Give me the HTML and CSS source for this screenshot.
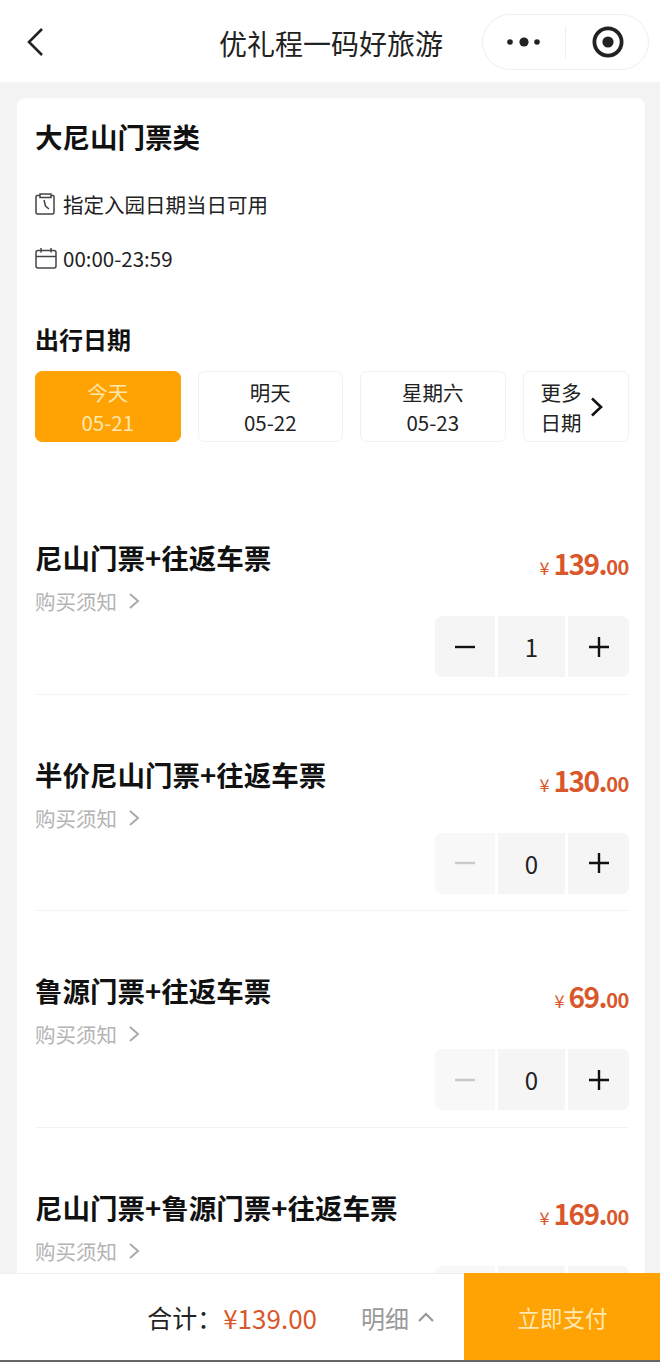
FILE: index.html
```html
<!DOCTYPE html>
<html lang="zh-CN">
<head>
  <meta charset="UTF-8">
  <meta name="viewport" content="width=device-width, initial-scale=1.0">
  <title>优礼程一码好旅游</title>
  <link rel="stylesheet" href="styles.css">
</head>
<body>

<header class="navBar">
  <svg class="backIcon" width="20" height="32" viewBox="0 0 20 32"><path d="M17 3 L4 16 L17 29" fill="none" stroke="#222" stroke-width="2.6"/></svg>
  <h1 class="navTitle">优礼程一码好旅游</h1>
  <div class="capsule">
    <svg width="36" height="12" viewBox="0 0 36 12"><circle cx="5" cy="6" r="2.8" fill="#222"/><circle cx="19" cy="6" r="4.6" fill="#222"/><circle cx="32" cy="6" r="2.8" fill="#222"/></svg>
    <span class="capsuleLine"></span>
    <svg width="32" height="32" viewBox="0 0 32 32"><circle cx="16" cy="16" r="13.6" fill="none" stroke="#222" stroke-width="3.8"/><circle cx="16" cy="16" r="5.6" fill="#222"/></svg>
  </div>
</header>

<main class="content">
  <div class="card">
    <h2 class="cardTitle">大尼山门票类</h2>
    <p class="infoRow">
      <svg width="22" height="22" viewBox="0 0 22 22" fill="none" stroke="#444" stroke-width="1.5"><path d="M5 2.5 H2 Q1 2.5 1 3.5 V19.5 Q1 21 2.5 21 H17.5 Q19 21 19 19.5 V3.5 Q19 2.5 18 2.5 H16"/><path d="M5 1 H16 V4.5 H5 Z"/><path d="M9 7 L10.5 13 L14 16"/></svg>
      指定入园日期当日可用
    </p>
    <p class="infoRow">
      <svg width="22" height="22" viewBox="0 0 22 22" fill="none" stroke="#444" stroke-width="1.5"><rect x="1" y="3.5" width="20" height="17.5" rx="2"/><path d="M1 9.5 H21 M6 1 V5.5 M16 1 V5.5"/></svg>
      00:00-23:59
    </p>

    <h3 class="dateLabel">出行日期</h3>
    <div class="dateRow">
      <div class="dateBtn active"><span>今天</span><span>05-21</span></div>
      <div class="dateBtn"><span>明天</span><span>05-22</span></div>
      <div class="dateBtn"><span>星期六</span><span>05-23</span></div>
      <div class="dateBtn moreBtn">
        <div class="moreText"><span>更多</span><span>日期</span></div>
        <svg width="14" height="20" viewBox="0 0 14 20"><path d="M2 1.5 L11 10 L2 18.5" fill="none" stroke="#111" stroke-width="2.6"/></svg>
      </div>
    </div>

    <div class="ticketList">
      <div class="ticket">
        <div class="ticketTop">
          <div class="ticketName">尼山门票+往返车票</div>
          <div class="price"><span class="yen">¥</span>139.<span class="cents">00</span></div>
        </div>
        <div class="notice">购买须知
          <svg width="12" height="18" viewBox="0 0 12 18"><path d="M2 2 L10 9 L2 16" fill="none" stroke="#aaa" stroke-width="2"/></svg>
        </div>
        <div class="stepper">
          <div class="stepBtn minus"><svg width="20" height="20" viewBox="0 0 20 20"><path d="M0 10 H20" stroke="currentColor" stroke-width="2.4"/></svg></div>
          <div class="stepNum">1</div>
          <div class="stepBtn plus"><svg width="20" height="20" viewBox="0 0 20 20"><path d="M0 10 H20 M10 0 V20" stroke="currentColor" stroke-width="2.4"/></svg></div>
        </div>
      </div>

      <div class="ticket">
        <div class="ticketTop">
          <div class="ticketName">半价尼山门票+往返车票</div>
          <div class="price"><span class="yen">¥</span>130.<span class="cents">00</span></div>
        </div>
        <div class="notice">购买须知
          <svg width="12" height="18" viewBox="0 0 12 18"><path d="M2 2 L10 9 L2 16" fill="none" stroke="#aaa" stroke-width="2"/></svg>
        </div>
        <div class="stepper">
          <div class="stepBtn minus off"><svg width="20" height="20" viewBox="0 0 20 20"><path d="M0 10 H20" stroke="currentColor" stroke-width="2.4"/></svg></div>
          <div class="stepNum">0</div>
          <div class="stepBtn plus"><svg width="20" height="20" viewBox="0 0 20 20"><path d="M0 10 H20 M10 0 V20" stroke="currentColor" stroke-width="2.4"/></svg></div>
        </div>
      </div>

      <div class="ticket">
        <div class="ticketTop">
          <div class="ticketName">鲁源门票+往返车票</div>
          <div class="price"><span class="yen">¥</span>69.<span class="cents">00</span></div>
        </div>
        <div class="notice">购买须知
          <svg width="12" height="18" viewBox="0 0 12 18"><path d="M2 2 L10 9 L2 16" fill="none" stroke="#aaa" stroke-width="2"/></svg>
        </div>
        <div class="stepper">
          <div class="stepBtn minus off"><svg width="20" height="20" viewBox="0 0 20 20"><path d="M0 10 H20" stroke="currentColor" stroke-width="2.4"/></svg></div>
          <div class="stepNum">0</div>
          <div class="stepBtn plus"><svg width="20" height="20" viewBox="0 0 20 20"><path d="M0 10 H20 M10 0 V20" stroke="currentColor" stroke-width="2.4"/></svg></div>
        </div>
      </div>

      <div class="ticket">
        <div class="ticketTop">
          <div class="ticketName">尼山门票+鲁源门票+往返车票</div>
          <div class="price"><span class="yen">¥</span>169.<span class="cents">00</span></div>
        </div>
        <div class="notice">购买须知
          <svg width="12" height="18" viewBox="0 0 12 18"><path d="M2 2 L10 9 L2 16" fill="none" stroke="#aaa" stroke-width="2"/></svg>
        </div>
        <!-- only the top edge of this one shows above the pay bar -->
        <div class="stepper">
          <div class="stepBtn minus off"></div>
          <div class="stepNum"></div>
          <div class="stepBtn plus"></div>
        </div>
      </div>
    </div>
  </div>
</main>

<footer class="payBar">
  <div class="totalArea">
    <span class="totalLabel">合计：</span>
    <span class="totalPrice">¥139.00</span>
    <span class="detail">明细</span>
    <svg width="18" height="12" viewBox="0 0 18 12"><path d="M2 10 L9 3 L16 10" fill="none" stroke="#999" stroke-width="2.2"/></svg>
  </div>
  <div class="payBtn">立即支付</div>
</footer>

</body>
</html>
```
FILE: styles.css
```css
* {
  box-sizing: border-box;
}
html, body {
  height: 100%;
}
body {
  margin: 0;
  height: 1362px;
  overflow: hidden;
  display: flex;
  flex-direction: column;
  background-color: #f3f3f3;
  color: #111;
  font-family: "Noto Sans CJK SC", "Noto Sans", sans-serif;
}
h1, h2, h3, p {
  margin: 0;
}

/* top bar */
.navBar {
  height: 82px;
  flex: none;
  background-color: #fff;
  display: flex;
  align-items: center;
  justify-content: center;
  position: relative;
}
.backIcon {
  position: absolute;
  left: 25px;
  top: 26px;
}
.navTitle {
  font-size: 28px;
  font-weight: 400;
  line-height: 40px;
  margin-top: 4px;
  margin-left: 2px;
  color: #222;
}
.capsule {
  position: absolute;
  left: 482px;
  top: 14px;
  width: 167px;
  height: 56px;
  border: 1px solid #eee;
  border-radius: 28px;
  display: flex;
  align-items: center;
  padding-left: 22px;
}
.capsuleLine {
  width: 1px;
  height: 32px;
  background-color: #eee;
  margin: 0 26px 0 24px;
}

/* main card */
.content {
  flex: 1;
  min-height: 0;
  overflow: hidden;
  padding: 16px 15px 0 17px;
}
.card {
  background-color: #fff;
  border-radius: 8px 8px 0 0;
  padding: 18px 16px 0 18px;
}
.cardTitle {
  font-size: 27.5px;
  font-weight: 700;
  line-height: 40px;
  margin-bottom: 33px;
}
.infoRow {
  display: flex;
  align-items: center;
  gap: 6px;
  font-size: 20.5px;
  line-height: 30px;
  height: 30px;
  margin-bottom: 24px;
  color: #222;
}
.dateLabel {
  font-size: 24px;
  font-weight: 700;
  line-height: 36px;
  margin-top: 48px;
  margin-bottom: 14px;
}
.dateRow {
  display: flex;
  gap: 17px;
}
.dateBtn {
  width: 145.5px;
  height: 71px;
  border: 1px solid #f1f1f1;
  border-radius: 7px;
  display: flex;
  flex-direction: column;
  align-items: center;
  justify-content: center;
  font-size: 20.5px;
  line-height: 30px;
  color: #222;
}
.dateBtn.active {
  background-color: #ffa203;
  border-color: #ffa203;
  color: #ffe8b0;
}
.moreBtn {
  width: 106px;
  flex-direction: row;
  gap: 8px;
  justify-content: flex-start;
  padding-left: 17px;
}
.moreText {
  display: flex;
  flex-direction: column;
}

/* tickets */
.ticketList {
  margin-top: 36px;
}
.ticket {
  height: 216.5px;
  padding-top: 59px;
  border-bottom: 1px solid #f3f3f3;
}
.ticketTop {
  height: 40px;
  display: flex;
  justify-content: space-between;
}
.ticketName {
  font-size: 27.5px;
  font-weight: 700;
  line-height: 40px;
  white-space: nowrap;
}
.price {
  font-size: 28px;
  font-weight: 700;
  line-height: 40px;
  margin-top: 6px;
  color: #d9582b;
  letter-spacing: -1.5px;
}
.yen {
  font-size: 18px;
  font-weight: 400;
  margin-right: 4px;
  letter-spacing: 0;
}
.cents {
  font-size: 20px;
  letter-spacing: -0.4px;
}
.notice {
  display: flex;
  align-items: center;
  gap: 11px;
  font-size: 20.5px;
  line-height: 30px;
  margin-top: 9px;
  color: #b4b4b4;
}
.stepper {
  display: flex;
  justify-content: flex-end;
  gap: 3px;
  margin-top: 0;
}
.stepBtn, .stepNum {
  height: 61px;
  background-color: #f5f5f5;
  display: flex;
  align-items: center;
  justify-content: center;
}
.stepBtn {
  width: 60px;
  color: #111;
}
.stepNum {
  width: 67px;
  font-size: 24px;
  color: #222;
}
.minus {
  border-radius: 7px 0 0 7px;
}
.plus {
  width: 61px;
  border-radius: 0 7px 7px 0;
}
.minus.off {
  background-color: #f8f8f8;
  color: #c8c8c8;
}

/* bottom bar */
.payBar {
  height: 89px;
  flex: none;
  display: flex;
  background-color: #fff;
  border-top: 1px solid #eee;
  border-bottom: 2px solid #666;
}
.totalArea {
  flex: 1;
  display: flex;
  align-items: center;
  justify-content: flex-end;
  padding-right: 29px;
}
.totalLabel {
  font-size: 25px;
  color: #222;
  width: 76px;
}
.totalPrice {
  font-size: 26px;
  color: #d9582b;
  margin-right: 44px;
}
.detail {
  font-size: 24px;
  color: #999;
  margin-right: 8px;
}
.payBtn {
  width: 196px;
  margin-top: -1px;
  padding-left: 1px;
  background-color: #ffa203;
  color: #ffe8b0;
  font-size: 22.5px;
  display: flex;
  align-items: center;
  justify-content: center;
}
```
